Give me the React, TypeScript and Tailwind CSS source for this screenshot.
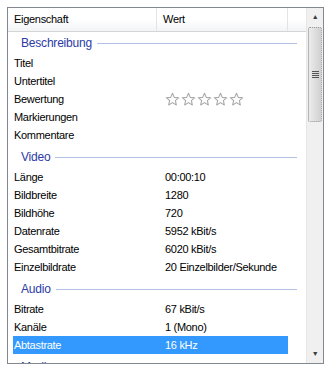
import React from 'react';

type Row = { label: string; value?: string; stars?: boolean; selected?: boolean };
type Group = { title: string; rows: Row[] };

// Eigenschaften-Daten, wie im Datei-Eigenschaften-Dialog
const groups: Group[] = [
  {
    title: 'Beschreibung',
    rows: [
      { label: 'Titel' },
      { label: 'Untertitel' },
      { label: 'Bewertung', stars: true },
      { label: 'Markierungen' },
      { label: 'Kommentare' },
    ],
  },
  {
    title: 'Video',
    rows: [
      { label: 'Länge', value: '00:00:10' },
      { label: 'Bildbreite', value: '1280' },
      { label: 'Bildhöhe', value: '720' },
      { label: 'Datenrate', value: '5952 kBit/s' },
      { label: 'Gesamtbitrate', value: '6020 kBit/s' },
      { label: 'Einzelbildrate', value: '20 Einzelbilder/Sekunde' },
    ],
  },
  {
    title: 'Audio',
    rows: [
      { label: 'Bitrate', value: '67 kBit/s' },
      { label: 'Kanäle', value: '1 (Mono)' },
      { label: 'Abtastrate', value: '16 kHz', selected: true },
    ],
  },
  { title: 'Medien', rows: [] },
];

function Star() {
  return (
    <svg width="15" height="15" viewBox="0 0 14 14" className="shrink-0">
      <path
        d="M7 1.2 8.7 5 12.8 5.3 9.7 8 10.6 12.1 7 9.9 3.4 12.1 4.3 8 1.2 5.3 5.3 5Z"
        fill="#fdfdfd"
        stroke="#a9a9a9"
        strokeWidth="1"
        strokeLinejoin="round"
      />
    </svg>
  );
}

function GroupHeader({ title, first }: { title: string; first?: boolean }) {
  return (
    <div className={`flex h-[22px] shrink-0 items-center gap-[5px] pl-[13px] pr-[9px] ${first ? '' : 'mt-[2px]'}`}>
      <span className="text-[12px] tracking-[-0.2px] text-[#2b3aa6]">{title}</span>
      <div className="h-px flex-1 bg-[#b3c0e4]" />
    </div>
  );
}

function PropRow({ row }: { row: Row }) {
  return (
    <div
      className={`mx-[5px] flex h-[18px] w-[275px] shrink-0 items-center ${
        row.selected ? 'bg-[#3399ff] text-white' : 'text-black'
      }`}
    >
      <div className="w-[150px] pl-[1px]">{row.label}</div>
      <div className="flex flex-1 items-center gap-[1px] pl-[2px]">
        {row.stars ? (
          <>
            <Star />
            <Star />
            <Star />
            <Star />
            <Star />
          </>
        ) : (
          row.value
        )}
      </div>
    </div>
  );
}

function ScrollBar() {
  return (
    <div className="flex w-[17px] shrink-0 flex-col border-l border-[#e6e6e6] bg-[#f0f0f0]">
      <div className="flex h-[19px] items-center justify-center text-[7px] text-[#3c3c3c]">▲</div>
      <div className="mx-[1px] flex h-[95px] items-center justify-center rounded-[2px] border border-dotted border-[#979797] bg-gradient-to-r from-[#ececec] via-[#dedede] to-[#d0d0d0]">
        <div className="flex flex-col gap-[1px]">
          <div className="h-px w-[7px] bg-[#555]" />
          <div className="h-px w-[7px] bg-[#555]" />
          <div className="h-px w-[7px] bg-[#555]" />
          <div className="h-px w-[7px] bg-[#555]" />
        </div>
      </div>
      <div className="flex-1" />
      <div className="flex h-[17px] items-center justify-center text-[7px] text-[#3c3c3c]">▼</div>
    </div>
  );
}

export default function App() {
  return (
    <div className="h-[374px] w-[333px] bg-white p-[7px] font-['Liberation_Sans',Arial,sans-serif] text-[11px] tracking-[-0.3px]">
      <div className="flex h-[357px] w-[317px] border border-[#828790] bg-white">
        <div className="flex w-[298px] flex-col overflow-hidden">
          {/* Kopfzeile */}
          <div className="flex h-[24px] shrink-0 border-b border-[#d5d5d5] bg-gradient-to-b from-white from-50% to-[#f3f4f6]">
            <div className="flex w-[149px] items-center border-r border-[#e3e4e6] pl-[6px]">Eigenschaft</div>
            <div className="flex w-[131px] items-center border-r border-[#e3e4e6] pl-[6px]">Wert</div>
            <div className="flex-1" />
          </div>
          {groups.map((g, i) => (
            <React.Fragment key={g.title}>
              <GroupHeader title={g.title} first={i === 0} />
              {g.rows.map((r) => (
                <PropRow key={r.label} row={r} />
              ))}
            </React.Fragment>
          ))}
        </div>
        <ScrollBar />
      </div>
    </div>
  );
}
